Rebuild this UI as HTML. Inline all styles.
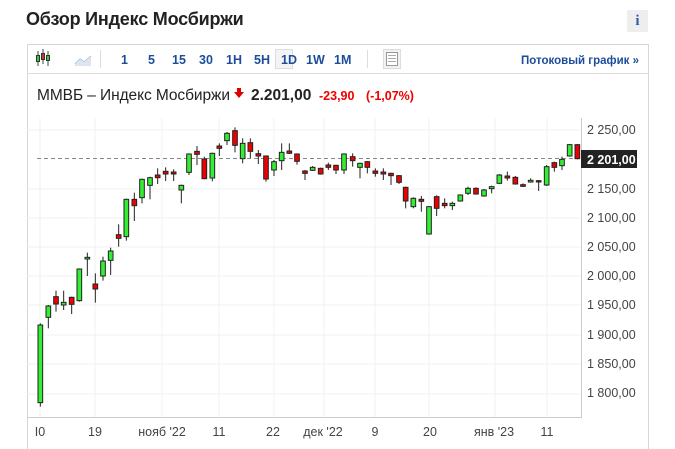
<!DOCTYPE html>
<html style="overflow:hidden;height:449px"><head><meta charset="utf-8"><style>
body{margin:0;background:#fff;font-family:"Liberation Sans",sans-serif;width:675px;height:449px;overflow:hidden;position:relative}
.a{position:absolute}
</style></head><body>
<div class="a" style="left:26px;top:9px;font-size:18px;font-weight:bold;color:#222;letter-spacing:-0.2px">Обзор Индекс Мосбиржи</div>
<div class="a" style="left:627px;top:10px;width:21px;height:22px;background:#eee;color:#2a5db0;font:bold 15px 'Liberation Serif',serif;text-align:center;line-height:22px">i</div>
<div class="a" style="left:27px;top:44px;width:622px;height:407px;border:1px solid #d6d6d6;box-sizing:border-box"></div>
<div class="a" style="left:27px;top:73px;width:622px;height:1px;background:#ddd"></div>
<svg class="a" style="left:0;top:0" width="675" height="449">
<g stroke="#444" stroke-width="1"><line x1="38" y1="51" x2="38" y2="66"/><line x1="43" y1="49" x2="43" y2="64"/><line x1="48" y1="51" x2="48" y2="66"/></g>
<rect x="36.5" y="55.5" width="3" height="6" fill="#3c3" stroke="#333"/><rect x="41.5" y="53.5" width="3" height="6" fill="#c33" stroke="#333"/><rect x="46.5" y="55.5" width="3" height="5" fill="#3c3" stroke="#333"/>
<path d="M75 64 L80 59 L84 62 L91 56" stroke="#8ab" fill="none"/><path d="M75 64 L80 59 L84 62 L91 56 L91 66 L75 66Z" fill="#dde6f0"/>
<line x1="100.5" y1="50" x2="100.5" y2="68" stroke="#ddd"/>
<line x1="367.5" y1="50" x2="367.5" y2="68" stroke="#ddd"/>
<rect x="275.5" y="49.5" width="17" height="19" fill="#f4f4f4" stroke="#ddd"/>
<rect x="383.5" y="49.5" width="17" height="19" fill="#f2f2f2" stroke="#ddd"/>
<rect x="386.5" y="52.5" width="11" height="13" fill="#fff" stroke="#999"/><g stroke="#aaa"><line x1="388" y1="55.5" x2="396" y2="55.5"/><line x1="388" y1="58.5" x2="396" y2="58.5"/><line x1="388" y1="61.5" x2="396" y2="61.5"/></g>
<g font-family="Liberation Sans" font-size="12.5" font-weight="bold" fill="#1c4d9c">
<text x="121" y="64">1</text><text x="148" y="64">5</text><text x="172" y="64">15</text><text x="199" y="64">30</text><text x="226" y="64">1H</text><text x="254" y="64">5H</text><text x="281" y="64">1D</text><text x="306" y="64">1W</text><text x="334" y="64">1M</text>
<text x="521" y="64" font-size="11.5">Потоковый график »</text></g>
<text x="37" y="100" font-size="15.5" fill="#222" textLength="193">ММВБ – Индекс Мосбиржи</text>
<path d="M237 88h4v4h3l-5 6-5-6h3z" fill="#d00"/>
<text x="251" y="100" font-size="15.5" font-weight="bold" fill="#222">2.201,00</text>
<text x="319" y="100" font-size="12.5" font-weight="bold" fill="#e00">-23,90</text>
<text x="366" y="100" font-size="12.5" font-weight="bold" fill="#e00">(-1,07%)</text>
<g stroke="#f0f0f0"><line x1="27" y1="130" x2="582" y2="130"/><line x1="27" y1="189" x2="582" y2="189"/><line x1="27" y1="218" x2="582" y2="218"/><line x1="27" y1="247" x2="582" y2="247"/><line x1="27" y1="276" x2="582" y2="276"/><line x1="27" y1="305" x2="582" y2="305"/><line x1="27" y1="335" x2="582" y2="335"/><line x1="27" y1="364" x2="582" y2="364"/><line x1="27" y1="394" x2="582" y2="394"/>
<line x1="40" y1="118" x2="40" y2="418"/><line x1="95" y1="118" x2="95" y2="418"/><line x1="162" y1="118" x2="162" y2="418"/><line x1="219" y1="118" x2="219" y2="418"/><line x1="274" y1="118" x2="274" y2="418"/><line x1="324" y1="118" x2="324" y2="418"/><line x1="375" y1="118" x2="375" y2="418"/><line x1="429" y1="118" x2="429" y2="418"/><line x1="495" y1="118" x2="495" y2="418"/><line x1="547" y1="118" x2="547" y2="418"/></g>
<line x1="27" y1="417.5" x2="582" y2="417.5" stroke="#ccc"/><line x1="581.5" y1="118" x2="581.5" y2="418" stroke="#ccc"/>
<line x1="37" y1="158.5" x2="582" y2="158.5" stroke="#888" stroke-dasharray="4,3"/>
<g font-size="12.5" fill="#444">
<text x="587" y="134">2 250,00</text><text x="587" y="193">2 150,00</text><text x="587" y="222">2 100,00</text><text x="587" y="251">2 050,00</text><text x="587" y="280">2 000,00</text><text x="587" y="309">1 950,00</text><text x="587" y="339">1 900,00</text><text x="587" y="368">1 850,00</text><text x="587" y="397">1 800,00</text>
<g text-anchor="middle"><text x="40" y="436">I0</text><text x="95" y="436">19</text><text x="162" y="436">нояб '22</text><text x="219" y="436">11</text><text x="273" y="436">22</text><text x="323" y="436">дек '22</text><text x="375" y="436">9</text><text x="430" y="436">20</text><text x="494" y="436">янв '23</text><text x="547" y="436">11</text></g></g>
<rect x="581" y="150" width="56" height="18" fill="#222"/><text x="587" y="164" font-size="12.5" font-weight="bold" fill="#fff">2 201,00</text>
<g transform="translate(20,110) scale(0.33333)" stroke="#222" stroke-width="3">
<line x1="61" y1="640" x2="61" y2="890"/><rect x="54" y="645" width="14" height="233" fill="#3e3"/>
<line x1="85" y1="585" x2="85" y2="655"/><rect x="78" y="588" width="14" height="34" fill="#3e3"/>
<line x1="108" y1="542" x2="108" y2="605"/><rect x="101" y="560" width="14" height="22" fill="#e00"/>
<line x1="131" y1="542" x2="131" y2="600"/><rect x="124" y="577" width="14" height="8" fill="#3e3"/>
<line x1="155" y1="560" x2="155" y2="612"/><rect x="148" y="562" width="14" height="21" fill="#e00"/>
<line x1="178" y1="475" x2="178" y2="575"/><rect x="171" y="477" width="14" height="95" fill="#3e3"/>
<line x1="202" y1="428" x2="202" y2="498"/><rect x="195" y="442" width="14" height="5" fill="#3e3"/>
<line x1="226" y1="490" x2="226" y2="578"/><rect x="219" y="522" width="14" height="15" fill="#e00"/>
<line x1="249" y1="440" x2="249" y2="512"/><rect x="242" y="453" width="14" height="45" fill="#3e3"/>
<line x1="272" y1="413" x2="272" y2="495"/><rect x="265" y="423" width="14" height="28" fill="#3e3"/>
<line x1="296" y1="343" x2="296" y2="410"/><rect x="289" y="374" width="14" height="11" fill="#e00"/>
<line x1="319" y1="266" x2="319" y2="392"/><rect x="312" y="268" width="14" height="112" fill="#3e3"/>
<line x1="343" y1="248" x2="343" y2="333"/><rect x="336" y="268" width="14" height="19" fill="#e00"/>
<line x1="366" y1="206" x2="366" y2="280"/><rect x="359" y="208" width="14" height="55" fill="#3e3"/>
<line x1="390" y1="200" x2="390" y2="268"/><rect x="383" y="203" width="14" height="23" fill="#3e3"/>
<line x1="413" y1="175" x2="413" y2="222"/><rect x="406" y="195" width="14" height="8" fill="#e00"/>
<line x1="437" y1="172" x2="437" y2="213"/><rect x="430" y="184" width="14" height="8" fill="#e00"/>
<line x1="461" y1="178" x2="461" y2="213"/><rect x="454" y="186" width="14" height="6" fill="#e00"/>
<line x1="484" y1="224" x2="484" y2="280"/><rect x="477" y="226" width="14" height="14" fill="#3e3"/>
<line x1="507" y1="130" x2="507" y2="195"/><rect x="500" y="132" width="14" height="55" fill="#3e3"/>
<line x1="531" y1="108" x2="531" y2="165"/><rect x="524" y="124" width="14" height="9" fill="#e00"/>
<line x1="553" y1="140" x2="553" y2="208"/><rect x="546" y="147" width="14" height="59" fill="#e00"/>
<line x1="577" y1="128" x2="577" y2="214"/><rect x="570" y="130" width="14" height="74" fill="#3e3"/>
<line x1="598" y1="100" x2="598" y2="138"/><rect x="591" y="108" width="14" height="7" fill="#e00"/>
<line x1="621" y1="66" x2="621" y2="105"/><rect x="614" y="70" width="14" height="22" fill="#3e3"/>
<line x1="645" y1="52" x2="645" y2="127"/><rect x="638" y="62" width="14" height="44" fill="#e00"/>
<line x1="668" y1="85" x2="668" y2="160"/><rect x="661" y="100" width="14" height="46" fill="#3e3"/>
<line x1="691" y1="85" x2="691" y2="145"/><rect x="684" y="98" width="14" height="26" fill="#e00"/>
<line x1="715" y1="120" x2="715" y2="162"/><rect x="708" y="131" width="14" height="7" fill="#e00"/>
<line x1="738" y1="136" x2="738" y2="215"/><rect x="731" y="138" width="14" height="69" fill="#e00"/>
<line x1="762" y1="150" x2="762" y2="198"/><rect x="755" y="155" width="14" height="25" fill="#3e3"/>
<line x1="785" y1="100" x2="785" y2="180"/><rect x="778" y="127" width="14" height="25" fill="#3e3"/>
<line x1="808" y1="100" x2="808" y2="132"/><rect x="801" y="123" width="14" height="7" fill="#e00"/>
<line x1="831" y1="130" x2="831" y2="164"/><rect x="824" y="132" width="14" height="22" fill="#e00"/>
<line x1="855" y1="180" x2="855" y2="210"/><rect x="848" y="183" width="14" height="7" fill="#e00"/>
<line x1="878" y1="168" x2="878" y2="183"/><rect x="871" y="172" width="14" height="9" fill="#3e3"/>
<line x1="902" y1="173" x2="902" y2="194"/><rect x="895" y="175" width="14" height="17" fill="#e00"/>
<line x1="925" y1="158" x2="925" y2="180"/><rect x="918" y="165" width="14" height="7" fill="#e00"/>
<line x1="948" y1="164" x2="948" y2="192"/><rect x="941" y="166" width="14" height="14" fill="#e00"/>
<line x1="972" y1="130" x2="972" y2="192"/><rect x="965" y="132" width="14" height="48" fill="#3e3"/>
</g>
<g transform="translate(340,110) scale(0.33333)" stroke="#222" stroke-width="3">
<line x1="38" y1="130" x2="38" y2="170"/><rect x="31" y="140" width="14" height="12" fill="#e00"/>
<line x1="60" y1="158" x2="60" y2="205"/><rect x="53" y="160" width="14" height="12" fill="#3e3"/>
<line x1="82" y1="153" x2="82" y2="190"/><rect x="75" y="155" width="14" height="17" fill="#e00"/>
<line x1="106" y1="175" x2="106" y2="200"/><rect x="99" y="183" width="14" height="7" fill="#e00"/>
<line x1="130" y1="175" x2="130" y2="210"/><rect x="123" y="186" width="14" height="6" fill="#e00"/>
<line x1="153" y1="188" x2="153" y2="225"/><rect x="146" y="190" width="14" height="7" fill="#e00"/>
<line x1="177" y1="195" x2="177" y2="222"/><rect x="170" y="197" width="14" height="20" fill="#e00"/>
<line x1="197" y1="230" x2="197" y2="295"/><rect x="190" y="232" width="14" height="41" fill="#e00"/>
<line x1="220" y1="262" x2="220" y2="295"/><rect x="213" y="265" width="14" height="25" fill="#3e3"/>
<line x1="244" y1="258" x2="244" y2="305"/><rect x="237" y="268" width="14" height="6" fill="#e00"/>
<line x1="267" y1="288" x2="267" y2="374"/><rect x="260" y="290" width="14" height="82" fill="#3e3"/>
<line x1="290" y1="256" x2="290" y2="318"/><rect x="283" y="260" width="14" height="35" fill="#e00"/>
<line x1="314" y1="265" x2="314" y2="295"/><rect x="307" y="280" width="14" height="7" fill="#e00"/>
<line x1="337" y1="275" x2="337" y2="300"/><rect x="330" y="280" width="14" height="7" fill="#3e3"/>
<line x1="361" y1="253" x2="361" y2="275"/><rect x="354" y="255" width="14" height="18" fill="#3e3"/>
<line x1="384" y1="230" x2="384" y2="255"/><rect x="377" y="235" width="14" height="15" fill="#3e3"/>
<line x1="408" y1="232" x2="408" y2="254"/><rect x="401" y="235" width="14" height="17" fill="#e00"/>
<line x1="432" y1="237" x2="432" y2="260"/><rect x="425" y="240" width="14" height="18" fill="#3e3"/>
<line x1="455" y1="227" x2="455" y2="250"/><rect x="448" y="230" width="14" height="6" fill="#3e3"/>
<line x1="478" y1="192" x2="478" y2="222"/><rect x="471" y="195" width="14" height="25" fill="#3e3"/>
<line x1="502" y1="185" x2="502" y2="212"/><rect x="495" y="198" width="14" height="6" fill="#e00"/>
<line x1="526" y1="198" x2="526" y2="224"/><rect x="519" y="202" width="14" height="20" fill="#e00"/>
<line x1="549" y1="220" x2="549" y2="231"/><rect x="542" y="224" width="14" height="5" fill="#e00"/>
<line x1="572" y1="205" x2="572" y2="218"/><rect x="565" y="211" width="14" height="5" fill="#3e3"/>
<line x1="596" y1="210" x2="596" y2="243"/><rect x="589" y="212" width="14" height="4" fill="#e00"/>
<line x1="620" y1="165" x2="620" y2="228"/><rect x="613" y="170" width="14" height="55" fill="#3e3"/>
<line x1="643" y1="155" x2="643" y2="185"/><rect x="636" y="158" width="14" height="14" fill="#e00"/>
<line x1="666" y1="140" x2="666" y2="180"/><rect x="659" y="148" width="14" height="19" fill="#3e3"/>
<line x1="689" y1="102" x2="689" y2="140"/><rect x="682" y="104" width="14" height="34" fill="#3e3"/>
<line x1="712" y1="102" x2="712" y2="148"/><rect x="705" y="104" width="14" height="42" fill="#e00"/>
</g>
</svg>
</body></html>
